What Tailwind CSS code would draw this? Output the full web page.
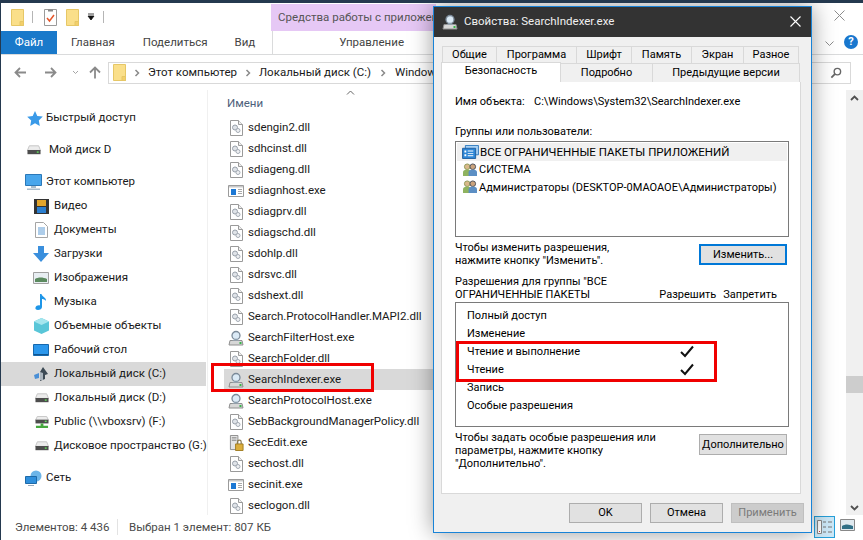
<!DOCTYPE html>
<html lang="ru">
<head>
<meta charset="UTF-8" />
<title>Свойства: SearchIndexer.exe</title>
<script src="https://cdn.jsdelivr.net/npm/@tailwindcss/browser@4"></script>
</head>
<body class="bg-white">

<!-- Shared icons -->
<svg width="0" height="0" class="absolute">
  <defs>
    <symbol id="folder" viewBox="0 0 13 17"><path d="M.5.5h12v16H.5z" fill="#fadf8a" stroke="#e6c766"/><path d="M9 12.500h3.500v4H9z" fill="#f3cf6a" stroke="#e6c766"/></symbol>
    <symbol id="dll" viewBox="0 0 13 16"><path d="M.5.5h8l4 4v11H.5z" fill="#fff" stroke="#9a9a9a"/><path d="M8.500.5v4h4" fill="#eee" stroke="#9a9a9a"/><circle cx="5" cy="7.500" r="2.500" fill="#dfe3e8" stroke="#98a0aa"/><circle cx="8" cy="10.500" r="2" fill="#eef0f3" stroke="#a5acb5"/></symbol>
    <symbol id="exe" viewBox="0 0 16 12"><path d="M.5.5h15v11H.5z" fill="#fff" stroke="#9b9b9b"/><path d="M1 1h14v1.500H1z" fill="#c9c9c9"/><path d="M3 4h5v6H3z" fill="#1c78d4"/><path d="M10 4.500h4M10 6.500h4M10 8.500h4" stroke="#a8a8a8"/></symbol>
    <symbol id="search" viewBox="0 0 16 16"><path d="M1 15l1-4.500h12l1 4.500z" fill="#d7d7d7" stroke="#8f8f8f"/><circle cx="8" cy="5.500" r="4" fill="#dbeaf6" stroke="#7b8a99" stroke-width="1.300"/><path d="M4 10.500c1-1.500 7-1.500 8 0" fill="#9eb2c4"/><path d="M11.500 12h2v2h-2z" fill="#39b54a"/></symbol>
    <symbol id="secedit" viewBox="0 0 16 17"><path d="M1.500.5h8v15h-8z" fill="#e4e4e4" stroke="#8c8c8c"/><path d="M3 3h5M3 5.500h5" stroke="#777"/><path d="M7 9.500h8v7H7z" fill="#dcae3c" stroke="#a07c20"/><path d="M9 9.500V7.500a2 2 0 014 0v2" fill="none" stroke="#8a7a50" stroke-width="1.300"/></symbol>
    <symbol id="drive" viewBox="0 0 15 10"><path d="M2.500.5h10l2 5h-14z" fill="#ececec" stroke="#c4c4c4"/><path d="M.5 5h14v4.500H.5z" fill="#4d4d4d"/><path d="M10.500 6.500h2v1.500h-2z" fill="#63e05c"/></symbol>
    <symbol id="netdrive" viewBox="0 0 15 14"><path d="M2.500.5h10l2 4h-14z" fill="#ececec" stroke="#c4c4c4"/><path d="M.5 4h14v4H.5z" fill="#4d4d4d"/><path d="M10.500 5h2v1.500h-2z" fill="#63e05c"/><path d="M6 8h3v2.500h5V13H1v-2.500h5z" fill="#46a83e"/></symbol>
    <symbol id="users" viewBox="0 0 16 15"><circle cx="5" cy="4" r="3" fill="#d9b98a" stroke="#8f9a58"/><path d="M.5 14V10c0-2 2-3 4.500-3S9 8 9 10v4z" fill="#8fb35f"/><circle cx="11" cy="4" r="3" fill="#caa27c" stroke="#4a4f58"/><path d="M6.500 14v-4c0-2 2-3 4.500-3s4.500 1 4.500 3v4z" fill="#5c8fc4"/></symbol>
    <symbol id="pkgs" viewBox="0 0 18 15"><path d="M3.500.5h14v10h-14z" fill="#a9d2f5" stroke="#2b77bd"/><path d="M.5 3.500h14v11H.5z" fill="#2d86d6" stroke="#1e5e9e"/><path d="M2.500 6h2v2h-2zM6 6h6v1H6zM6 8.500h6v1H6zM2.500 10h2v2h-2zM6 11h6v1H6z" fill="#fff"/></symbol>
    <symbol id="check" viewBox="0 0 14 12"><path d="M1 6.500L5 10.500 13 1" fill="none" stroke="#111" stroke-width="2"/></symbol>
    <symbol id="chev" viewBox="0 0 6 8"><path d="M1.500 1l3 3-3 3" fill="none" stroke="#8a8a8a" stroke-width="1.500"/></symbol>
  </defs>
</svg>

<div class="relative w-[863px] h-[540px] overflow-hidden bg-white border-t-[3px] border-l border-[#24394f] font-['Roboto',sans-serif] text-[11.5px] text-[#1a1a1a] flex flex-col">

  <!-- Quick access row -->
  <div class="h-[28px] flex shrink-0 items-center relative">
    <svg class="w-[13px] h-[17px] ml-[10px]"><use href="#folder"/></svg>
    <div class="w-px h-[12px] bg-[#b5b5b5] ml-[8px]"></div>
    <svg class="w-[13px] h-[17px] ml-[11px]" viewBox="0 0 13 17"><path d="M.5.5h12v16H.5z" fill="#fff" stroke="#9a9a9a"/><path d="M3 9l2.500 3L10 6" fill="none" stroke="#e5562a" stroke-width="1.500"/><path d="M4 .5h5v2H4z" fill="#888"/></svg>
    <svg class="w-[13px] h-[17px] ml-[9px]"><use href="#folder"/></svg>
    <svg class="w-[8px] h-[8px] ml-[8px]" viewBox="0 0 8 8"><path d="M1 1h6M1 3h6L4 7z" fill="#111" stroke="#111" stroke-width=".8"/></svg>
    <div class="w-px h-[12px] bg-[#b5b5b5] ml-[8px]"></div>
    <div class="ml-[167px] w-[165px] h-[27px] mt-px bg-[#e6c8f5] pl-[7px] flex items-center text-[#555] whitespace-nowrap">Средства работы с приложен</div>
    <svg class="absolute left-[833px] top-[7px] w-[11px] h-[11px]" viewBox="0 0 11 11"><path d="M.5.500l10 10M10.500.500l-10 10" stroke="#8c8c8c"/></svg>
  </div>

  <!-- Ribbon tabs -->
  <div class="h-[24px] flex shrink-0 items-center border-b border-[#dadbdc] relative">
    <div class="w-[56px] h-[23px] bg-[#1979ca] text-white flex items-center justify-center">Файл</div>
    <span class="ml-[14px] text-[#444]">Главная</span>
    <span class="ml-[28px] text-[#444]">Поделиться</span>
    <span class="ml-[27px] text-[#444]">Вид</span>
    <div class="w-px h-full bg-[#dadbdc] ml-[17px]"></div>
    <span class="ml-[66px] text-[#444]">Управление</span>
    <svg class="absolute left-[824px] top-[10px] w-[9px] h-[5px]" viewBox="0 0 9 5"><path d="M.5.500l4 4 4-4" fill="none" stroke="#8c8c8c"/></svg>
    <div class="absolute left-[843px] top-[4px] w-[14px] h-[14px] rounded-full bg-[#1977ce] text-white text-[11px] font-bold flex items-center justify-center">?</div>
  </div>

  <!-- Address row -->
  <div class="h-[35px] flex shrink-0 items-center relative">
    <svg class="w-[13px] h-[11px] ml-[13px]" viewBox="0 0 13 11"><path d="M12 5.500H2M6 1L1.500 5.500 6 10" fill="none" stroke="#8a8a8a" stroke-width="1.800"/></svg>
    <svg class="w-[13px] h-[11px] ml-[17px]" viewBox="0 0 13 11"><path d="M1 5.500h10M7 1l4.500 4.500L7 10" fill="none" stroke="#8a8a8a" stroke-width="1.800"/></svg>
    <svg class="w-[7px] h-[5px] ml-[15px]" viewBox="0 0 7 5"><path d="M1 1l2.500 2.500L6 1" fill="none" stroke="#a5a5a5"/></svg>
    <svg class="w-[12px] h-[13px] ml-[10px]" viewBox="0 0 12 13"><path d="M6 12.500V2M1 6.500L6 1.500l5 5" fill="none" stroke="#8a8a8a" stroke-width="1.800"/></svg>
    <div class="ml-[7px] w-[743px] h-[22px] border border-[#d9d9d9] flex items-center whitespace-nowrap overflow-hidden">
      <svg class="w-[13px] h-[17px] ml-[4px] shrink-0"><use href="#folder"/></svg>
      <svg class="w-[6px] h-[8px] ml-[8px] shrink-0"><use href="#chev"/></svg>
      <span class="ml-[8px]">Этот компьютер</span>
      <svg class="w-[6px] h-[8px] ml-[8px] shrink-0"><use href="#chev"/></svg>
      <span class="ml-[8px]">Локальный диск (C:)</span>
      <svg class="w-[6px] h-[8px] ml-[9px] shrink-0"><use href="#chev"/></svg>
      <span class="ml-[9px]">Windows</span>
      <svg class="ml-auto mr-[8px] w-[12px] h-[12px] shrink-0" viewBox="0 0 13 13"><circle cx="8" cy="5" r="3.500" fill="none" stroke="#666" stroke-width="1.500"/><path d="M5.500 7.500L1.500 11.500" stroke="#666" stroke-width="2"/></svg>
    </div>
  </div>

  <!-- Explorer body -->
  <div class="flex flex-1 min-h-0">
    <aside class="w-[207px] border-r border-[#f0f0f0] pt-[16px] whitespace-nowrap">
      <div class="h-[24px] flex items-center pl-[26px]">
        <svg class="w-[16px] h-[15px] mr-[3px]" viewBox="0 0 16 15"><path d="M8 0l2.300 5 5.500.6-4 3.800 1 5.500L8 12.200 3.200 15l1-5.500-4-3.800L5.700 5z" fill="#3a9ae8"/></svg>
        <span>Быстрый доступ</span>
      </div>
      <div class="h-[24px] flex items-center pl-[26px] mt-[8px]">
        <svg class="w-[14px] h-[10px] mr-[8px]"><use href="#drive"/></svg>
        <span>Мой диск D</span>
      </div>
      <div class="h-[24px] flex items-center pl-[24px] mt-[8px]">
        <svg class="w-[17px] h-[16px] mr-[4px]" viewBox="0 0 17 16"><path d="M.5.500h16v11H.5z" fill="#48a6ec" stroke="#2b78b8"/><path d="M6 12h5v2H6zM2 14.500h13V16H2z" fill="#a9bccb"/></svg>
        <span>Этот компьютер</span>
      </div>
      <div class="h-[24px] flex items-center pl-[33px]">
        <svg class="w-[15px] h-[15px] mr-[5px]" viewBox="0 0 15 15"><path d="M0 0h15v15H0z" fill="#333"/><path d="M3 1h9v6H3z" fill="#e2a52c"/><path d="M3 8h9v6H3z" fill="#2b7fd0"/></svg>
        <span>Видео</span>
      </div>
      <div class="h-[24px] flex items-center pl-[34px]">
        <svg class="w-[13px] h-[16px] mr-[6px]" viewBox="0 0 13 16"><path d="M.5.500h8l4 4v11H.5z" fill="#fff" stroke="#a5a5a5"/><path d="M3 6h7M3 8h7M3 10h7M3 12h7" stroke="#5d9bd5"/></svg>
        <span>Документы</span>
      </div>
      <div class="h-[24px] flex items-center pl-[32px]">
        <svg class="w-[16px] h-[16px] mr-[5px]" viewBox="0 0 16 16"><path d="M5 0h6v7h5l-8 9-8-9h5z" fill="#3a8fdd"/></svg>
        <span>Загрузки</span>
      </div>
      <div class="h-[24px] flex items-center pl-[32px]">
        <svg class="w-[16px] h-[12px] mr-[5px]" viewBox="0 0 16 12"><path d="M.5.500h15v11H.5z" fill="#e8eef2" stroke="#a0a0a0"/><path d="M2 7c3-2 8-2 12 0v3H2z" fill="#5b8a5f"/></svg>
        <span>Изображения</span>
      </div>
      <div class="h-[24px] flex items-center pl-[34px]">
        <svg class="w-[12px] h-[16px] mr-[7px]" viewBox="0 0 12 16"><path d="M5 0h1.500c.5 3 5 3.500 4.500 7-1-1.500-3-2-4-2v8c0 2-2 3-4 3s-3-1-2.500-2.500S3 11 5 11.500z" fill="#1e96e8"/></svg>
        <span>Музыка</span>
      </div>
      <div class="h-[24px] flex items-center pl-[33px]">
        <svg class="w-[15px] h-[16px] mr-[5px]" viewBox="0 0 15 16"><path d="M7.500 0l7.500 3.500v9L7.500 16 0 12.500v-9z" fill="#59c6d8"/><path d="M7.500 7L15 3.500 7.500 0 0 3.500z" fill="#a5e6ee"/></svg>
        <span>Объемные объекты</span>
      </div>
      <div class="h-[24px] flex items-center pl-[32px]">
        <svg class="w-[16px] h-[12px] mr-[5px]" viewBox="0 0 16 12"><path d="M.5.500h15v11H.5z" fill="#2b97ec" stroke="#1668ad"/><path d="M1 10h14v1H1z" fill="#0f5590"/></svg>
        <span>Рабочий стол</span>
      </div>
      <div class="h-[24px] flex items-center pl-[32px] bg-[#d9d9d9] w-[205px]">
        <svg class="w-[16px] h-[15px] mr-[5px]" viewBox="0 0 16 15"><path d="M1 8l5-2v5l-4 1z" fill="#4a8fd6"/><path d="M7 14V5l3-5 5 7-3 1v4z" fill="#3d4a55"/><path d="M7 5l3 1v7H7z" fill="#aab4bd"/></svg>
        <span>Локальный диск (C:)</span>
      </div>
      <div class="h-[24px] flex items-center pl-[34px]">
        <svg class="w-[14px] h-[10px] mr-[5px]"><use href="#drive"/></svg>
        <span>Локальный диск (D:)</span>
      </div>
      <div class="h-[24px] flex items-center pl-[34px]">
        <svg class="w-[14px] h-[13px] mr-[5px]"><use href="#netdrive"/></svg>
        <span>Public (\\vboxsrv) (F:)</span>
      </div>
      <div class="h-[24px] flex items-center pl-[34px]">
        <svg class="w-[14px] h-[10px] mr-[5px] shrink-0"><use href="#drive"/></svg>
        <span>Дисковое пространство (G:)</span>
      </div>
      <div class="h-[24px] flex items-center pl-[24px] mt-[8px]">
        <svg class="w-[17px] h-[16px] mr-[4px]" viewBox="0 0 17 16"><circle cx="11" cy="6" r="5.500" fill="#6db5e8"/><path d="M.5 6.500h11v7H.5z" fill="#2f8fdc" stroke="#1e6aa8"/><path d="M3 15h6v1H3z" fill="#9ab"/></svg>
        <span>Сеть</span>
      </div>
    </aside>

    <section class="flex-1 pl-[16px] whitespace-nowrap relative">
      <div class="h-[27px] flex items-center pl-[3px] pt-[1px] text-[#4c607a]">Имени</div>
      <svg class="absolute left-[138px] top-0 w-[9px] h-[5px]" viewBox="0 0 9 5"><path d="M1 4.500L4.500 1 8 4.500" fill="none" stroke="#666"/></svg>
      <div class="h-[21px] flex items-center pl-[6px]"><svg class="w-[13px] h-[16px] mr-[5px]"><use href="#dll"/></svg>sdengin2.dll</div>
      <div class="h-[21px] flex items-center pl-[6px]"><svg class="w-[13px] h-[16px] mr-[5px]"><use href="#dll"/></svg>sdhcinst.dll</div>
      <div class="h-[21px] flex items-center pl-[6px]"><svg class="w-[13px] h-[16px] mr-[5px]"><use href="#dll"/></svg>sdiageng.dll</div>
      <div class="h-[21px] flex items-center pl-[4px]"><svg class="w-[16px] h-[12px] mr-[4px]"><use href="#exe"/></svg>sdiagnhost.exe</div>
      <div class="h-[21px] flex items-center pl-[6px]"><svg class="w-[13px] h-[16px] mr-[5px]"><use href="#dll"/></svg>sdiagprv.dll</div>
      <div class="h-[21px] flex items-center pl-[6px]"><svg class="w-[13px] h-[16px] mr-[5px]"><use href="#dll"/></svg>sdiagschd.dll</div>
      <div class="h-[21px] flex items-center pl-[6px]"><svg class="w-[13px] h-[16px] mr-[5px]"><use href="#dll"/></svg>sdohlp.dll</div>
      <div class="h-[21px] flex items-center pl-[6px]"><svg class="w-[13px] h-[16px] mr-[5px]"><use href="#dll"/></svg>sdrsvc.dll</div>
      <div class="h-[21px] flex items-center pl-[6px]"><svg class="w-[13px] h-[16px] mr-[5px]"><use href="#dll"/></svg>sdshext.dll</div>
      <div class="h-[21px] flex items-center pl-[6px]"><svg class="w-[13px] h-[16px] mr-[5px]"><use href="#dll"/></svg>Search.ProtocolHandler.MAPI2.dll</div>
      <div class="h-[21px] flex items-center pl-[4px]"><svg class="w-[16px] h-[16px] mr-[4px]"><use href="#search"/></svg>SearchFilterHost.exe</div>
      <div class="h-[21px] flex items-center pl-[6px]"><svg class="w-[13px] h-[16px] mr-[5px]"><use href="#dll"/></svg>SearchFolder.dll</div>
      <div class="h-[21px] flex items-center pl-[4px] bg-[#d9d9d9] w-[209px]"><svg class="w-[16px] h-[16px] mr-[4px]"><use href="#search"/></svg>SearchIndexer.exe</div>
      <div class="h-[21px] flex items-center pl-[4px]"><svg class="w-[16px] h-[16px] mr-[4px]"><use href="#search"/></svg>SearchProtocolHost.exe</div>
      <div class="h-[21px] flex items-center pl-[6px]"><svg class="w-[13px] h-[16px] mr-[5px]"><use href="#dll"/></svg>SebBackgroundManagerPolicy.dll</div>
      <div class="h-[21px] flex items-center pl-[5px]"><svg class="w-[15px] h-[16px] mr-[4px]"><use href="#secedit"/></svg>SecEdit.exe</div>
      <div class="h-[21px] flex items-center pl-[6px]"><svg class="w-[13px] h-[16px] mr-[5px]"><use href="#dll"/></svg>sechost.dll</div>
      <div class="h-[21px] flex items-center pl-[4px]"><svg class="w-[16px] h-[12px] mr-[4px]"><use href="#exe"/></svg>secinit.exe</div>
      <div class="h-[21px] flex items-center pl-[6px]"><svg class="w-[13px] h-[16px] mr-[5px]"><use href="#dll"/></svg>seclogon.dll</div>
    </section>

    <!-- Scrollbar -->
    <div class="w-[17px] bg-[#f0f0f0] flex flex-col items-center relative">
      <svg class="w-[9px] h-[6px] mt-[5px]" viewBox="0 0 9 6"><path d="M1 5l3.500-3.500L8 5" fill="none" stroke="#505050" stroke-width="1.800"/></svg>
      <div class="absolute top-[286px] w-full h-[17px] bg-[#cdcdcd]"></div>
      <svg class="absolute bottom-[4px] w-[9px] h-[6px]" viewBox="0 0 9 6"><path d="M1 1l3.500 3.500L8 1" fill="none" stroke="#505050" stroke-width="1.800"/></svg>
    </div>
  </div>

  <!-- Status bar -->
  <div class="h-[25px] flex shrink-0 items-center text-[#4a4a4a] relative">
    <span class="ml-[14px]">Элементов: 4 436</span>
    <div class="absolute left-[116px] top-[4px] w-px h-[16px] bg-[#e3e3e3]"></div>
    <span class="absolute left-[128px] whitespace-nowrap">Выбран 1 элемент: 807 КБ</span>
    <div class="absolute left-[813px] top-[1px] w-[21px] h-[22px] bg-[#cce8f7] border border-[#26a0da] flex flex-col justify-center items-center">
      <svg class="w-[16px] h-[14px]" viewBox="0 0 16 14"><path d="M.5.500h4v13h-4z" fill="#fff" stroke="#888"/><path d="M6 2h3M11 2h4M6 7h3M11 7h4M6 12h3M11 12h4" stroke="#777"/><path d="M2 11h1v1H2z" fill="#c33"/></svg>
    </div>
    <svg class="absolute left-[839px] top-[4px] w-[15px] h-[12px]" viewBox="0 0 15 12"><path d="M.5.500h14v11H.5z" fill="#dfe9ef" stroke="#888"/><path d="M2 7c3-2 7-2 11 0v3H2z" fill="#2f6f86"/></svg>
  </div>

  <!-- Red marker around the selected file -->
  <div class="absolute left-[210px] top-[360px] w-[163px] h-[29px] border-[3px] border-[#f00000]"></div>

  <!-- Properties dialog -->
  <div class="absolute left-[432px] top-[3px] w-[379px] h-[527px] border border-[#1883d7] bg-[#f0f0f0] shadow-[0_0_22px_rgba(0,0,0,0.4)] flex flex-col text-[11px] text-black">
    <div class="h-[30px] shrink-0 bg-[#333333] text-[#f0f0f0] flex items-center pl-[8px] relative">
      <svg class="w-[16px] h-[16px] mr-[6px]"><use href="#search"/></svg>
      <span class="text-[11.500px]">Свойства: SearchIndexer.exe</span>
      <svg class="absolute right-[10px] top-[9px] w-[11px] h-[11px]" viewBox="0 0 11 11"><path d="M.5.500l10 10M10.500.500l-10 10" stroke="#fff" stroke-width="1.100"/></svg>
    </div>

    <!-- Tabs -->
    <div class="mt-[9px] pl-[8px] flex h-[17px] shrink-0">
      <div class="w-[55px] pt-px border border-[#d9d9d9] border-b-0 flex items-center justify-center">Общие</div>
      <div class="w-[80px] pt-px border-t border-r border-[#d9d9d9] flex items-center justify-center">Программа</div>
      <div class="w-[55px] pt-px border-t border-r border-[#d9d9d9] flex items-center justify-center">Шрифт</div>
      <div class="w-[60px] pt-px border-t border-r border-[#d9d9d9] flex items-center justify-center">Память</div>
      <div class="w-[52px] pt-px border-t border-r border-[#d9d9d9] flex items-center justify-center">Экран</div>
      <div class="w-[55px] pt-px border-t border-r border-[#d9d9d9] flex items-center justify-center">Разное</div>
    </div>
    <div class="pl-[7px] flex h-[19px] shrink-0 relative z-10">
      <div class="w-[120px] h-[20px] -mt-px bg-white border border-[#d9d9d9] border-b-0 flex items-center justify-center pb-[2px]">Безопасность</div>
      <div class="w-[92px] pt-px border-t border-r border-[#d9d9d9] flex items-center justify-center">Подробно</div>
      <div class="w-[147px] pt-px border-t border-r border-[#d9d9d9] flex items-center justify-center">Предыдущие версии</div>
    </div>

    <!-- Panel -->
    <div class="ml-[7px] w-[360px] h-[412px] shrink-0 bg-white border border-[#d9d9d9] border-t-0 pl-[13px] pr-[11px] leading-[13px] whitespace-nowrap">
      <div class="flex h-[14px] mt-[13px]"><span class="w-[79px]">Имя объекта:</span><span>C:\Windows\System32\SearchIndexer.exe</span></div>
      <div class="mt-[16px] h-[14px]">Группы или пользователи:</div>
      <div class="mt-[2px] h-[96px] w-[334px] border border-[#7a7a7a] p-px">
        <div class="h-[18px] bg-[#f0f0f0] flex items-center pl-[5px] text-[11.500px]"><svg class="w-[17px] h-[14px] mr-[1px] shrink-0"><use href="#pkgs"/></svg>ВСЕ ОГРАНИЧЕННЫЕ ПАКЕТЫ ПРИЛОЖЕНИЙ</div>
        <div class="h-[17px] flex items-center pl-[5px]"><svg class="w-[16px] h-[14px] mr-[1px] shrink-0"><use href="#users"/></svg>СИСТЕМА</div>
        <div class="h-[18px] flex items-center pl-[5px]"><svg class="w-[16px] h-[14px] mr-[1px] shrink-0"><use href="#users"/></svg>Администраторы (DESKTOP-0MAOAOE\Администраторы)</div>
      </div>
      <div class="flex justify-between mt-[3px] h-[31px]">
        <div class="pt-[1px]">Чтобы изменить разрешения,<br>нажмите кнопку "Изменить".</div>
        <div class="w-[88px] h-[21px] mt-[4px] mr-[2px] bg-[#e1e1e1] border-2 border-[#0078d7] flex items-center justify-center">Изменить...</div>
      </div>
      <div class="flex justify-between mt-[4px] h-[28px]">
        <div>Разрешения для группы "ВСЕ<br>ОГРАНИЧЕННЫЕ ПАКЕТЫ</div>
        <div class="flex items-end gap-[7px] mr-[12px] pb-[2px]"><span>Разрешить</span><span>Запретить</span></div>
      </div>
      <div class="mt-[-1px] h-[125px] w-[334px] border border-[#7a7a7a] pt-[3px] pl-[11px]">
        <div class="h-[18px] flex items-center">Полный доступ</div>
        <div class="h-[18px] flex items-center">Изменение</div>
        <div class="h-[18px] flex items-center justify-between pr-[94px]">Чтение и выполнение<svg class="w-[14px] h-[13px]"><use href="#check"/></svg></div>
        <div class="h-[18px] flex items-center justify-between pr-[94px]">Чтение<svg class="w-[14px] h-[13px]"><use href="#check"/></svg></div>
        <div class="h-[18px] flex items-center">Запись</div>
        <div class="h-[18px] flex items-center">Особые разрешения</div>
      </div>
      <div class="flex justify-between mt-[4px]">
        <div>Чтобы задать особые разрешения или<br>параметры, нажмите кнопку<br>"Дополнительно".</div>
        <div class="w-[88px] h-[21px] mt-[3px] mr-[2px] bg-[#e1e1e1] border border-[#adadad] flex items-center justify-center">Дополнительно</div>
      </div>
    </div>

    <!-- Dialog buttons -->
    <div class="flex justify-end gap-[8px] pr-[7px] mt-[9px]">
      <div class="w-[73px] h-[20px] bg-[#e1e1e1] border border-[#adadad] flex items-center justify-center">OK</div>
      <div class="w-[73px] h-[20px] bg-[#e1e1e1] border border-[#adadad] flex items-center justify-center">Отмена</div>
      <div class="w-[73px] h-[20px] bg-[#cccccc] border border-[#bfbfbf] text-[#7a7a7a] flex items-center justify-center">Применить</div>
    </div>

    <!-- Red marker around the read permissions -->
    <div class="absolute left-[22px] top-[334px] w-[261px] h-[41px] border-[3px] border-[#f00000]"></div>
  </div>
</div>
</body>
</html>
